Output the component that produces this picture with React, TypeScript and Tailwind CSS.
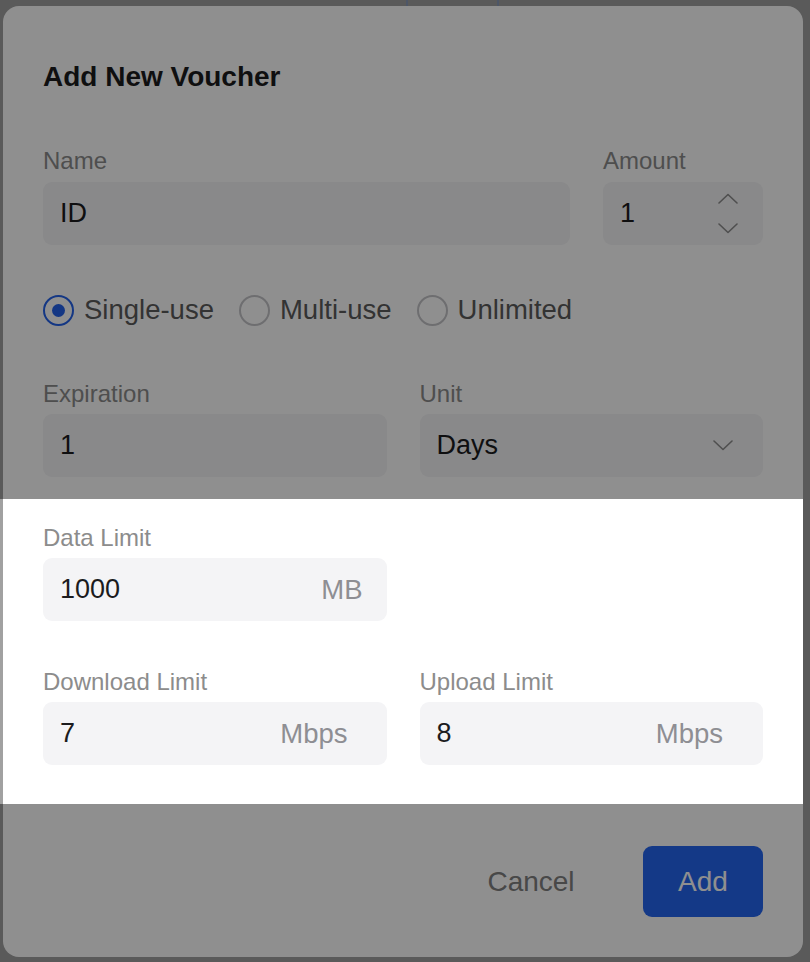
import { useState } from "react";

type Usage = "single" | "multi" | "unlimited";

const USAGE_OPTIONS: { value: Usage; label: string }[] = [
  { value: "single", label: "Single-use" },
  { value: "multi", label: "Multi-use" },
  { value: "unlimited", label: "Unlimited" },
];

function Chevron({ up = false }: { up?: boolean }) {
  return (
    <svg width="20" height="11" viewBox="0 0 20 11" fill="none" aria-hidden>
      <polyline
        points={up ? "1,10 10,1.5 19,10" : "1,1 10,9.5 19,1"}
        stroke="#8d8d8d"
        strokeWidth="1.6"
        strokeLinecap="round"
        strokeLinejoin="round"
      />
    </svg>
  );
}

function FieldLabel({ children }: { children: React.ReactNode }) {
  return <div className="text-[24px] leading-[30px] text-[#8c8c8c]">{children}</div>;
}

function SuffixInput({ value, suffix, pad }: { value: string; suffix: string; pad: string }) {
  return (
    <div className="mt-[5px] flex h-[63px] items-center justify-between rounded-[9px] bg-[#f4f4f6] pl-[17px]">
      <span className="text-[27px] text-[#1c1c1e]">{value}</span>
      <span className={`text-[27.5px] text-[#8e8e93] ${pad}`}>{suffix}</span>
    </div>
  );
}

export default function App() {
  const [usage, setUsage] = useState<Usage>("single");

  return (
    <div
      className="relative h-[962px] w-[810px] overflow-hidden bg-[#a1a1a1]"
      style={{ fontFamily: '"Liberation Sans", Arial, sans-serif' }}
    >
      {/* page underneath the modal, mostly hidden */}
      <div className="ml-[406px] h-[20px] w-[93px] border-x-2 border-[#8a9ab8]" />

      <div className="absolute left-[3px] top-[6px] flex h-[951px] w-[800px] flex-col rounded-[16px] bg-white px-10 pb-10 pt-[54px]">
        <h2 className="text-[28px] font-bold leading-[34px] text-[#1c1c1e]">Add New Voucher</h2>

        <div className="mt-[52px] flex gap-[33px]">
          <div className="flex-1">
            <FieldLabel>Name</FieldLabel>
            <div className="mt-[6px] flex h-[63px] items-center rounded-[9px] bg-[#f4f4f6] pl-[17px] text-[27px] text-[#1c1c1e]">
              ID
            </div>
          </div>
          <div className="w-[160px]">
            <FieldLabel>Amount</FieldLabel>
            <div className="mt-[6px] flex h-[63px] items-center justify-between rounded-[9px] bg-[#f4f4f6] pl-[17px] pr-[25px] text-[27px] text-[#1c1c1e]">
              <span>1</span>
              <div className="flex flex-col gap-[19px]">
                <Chevron up />
                <Chevron />
              </div>
            </div>
          </div>
        </div>

        <div className="mt-[49px] flex h-[32px] items-center gap-[25px]">
          {USAGE_OPTIONS.map((opt) => {
            const active = usage === opt.value;
            return (
              <button
                key={opt.value}
                onClick={() => setUsage(opt.value)}
                className="flex items-center gap-[10px]"
              >
                <span
                  className={`flex h-[31px] w-[31px] items-center justify-center rounded-full border-2 ${
                    active ? "border-[#2563eb]" : "border-[#c4c4c8]"
                  }`}
                >
                  {active && <span className="h-[13px] w-[13px] rounded-full bg-[#2563eb]" />}
                </span>
                <span className="text-[27.5px] text-[#5b5b5b]">{opt.label}</span>
              </button>
            );
          })}
        </div>

        <div className="mt-[53px] grid grid-cols-2 gap-x-[33px]">
          <div>
            <FieldLabel>Expiration</FieldLabel>
            <div className="mt-[5px] flex h-[63px] items-center rounded-[9px] bg-[#f4f4f6] pl-[17px] text-[27px] text-[#1c1c1e]">
              1
            </div>
          </div>
          <div>
            <FieldLabel>Unit</FieldLabel>
            <div className="mt-[5px] flex h-[63px] items-center justify-between rounded-[9px] bg-[#f4f4f6] pl-[17px] pr-[30px] text-[27px] text-[#1c1c1e]">
              <span>Days</span>
              <Chevron />
            </div>
          </div>
        </div>

        <div className="mt-[46px] grid grid-cols-2 gap-x-[33px]">
          <div>
            <FieldLabel>Data Limit</FieldLabel>
            <SuffixInput value="1000" suffix="MB" pad="pr-[24px]" />
          </div>
        </div>

        <div className="mt-[46px] grid grid-cols-2 gap-x-[33px]">
          <div>
            <FieldLabel>Download Limit</FieldLabel>
            <SuffixInput value="7" suffix="Mbps" pad="pr-[39px]" />
          </div>
          <div>
            <FieldLabel>Upload Limit</FieldLabel>
            <SuffixInput value="8" suffix="Mbps" pad="pr-[40px]" />
          </div>
        </div>

        <div className="mt-auto flex justify-end gap-[52px]">
          <button className="h-[71px] w-[120px] text-[28px] text-[#808080]">Cancel</button>
          <button className="h-[71px] w-[120px] rounded-[9px] bg-[#2566f0] text-[28px] text-white">Add</button>
        </div>
      </div>

      {/* tour spotlight */}
      <div className="pointer-events-none absolute left-0 top-[499px] h-[305px] w-[803px] shadow-[0_0_0_2000px_rgba(0,0,0,0.44)]" />
    </div>
  );
}
